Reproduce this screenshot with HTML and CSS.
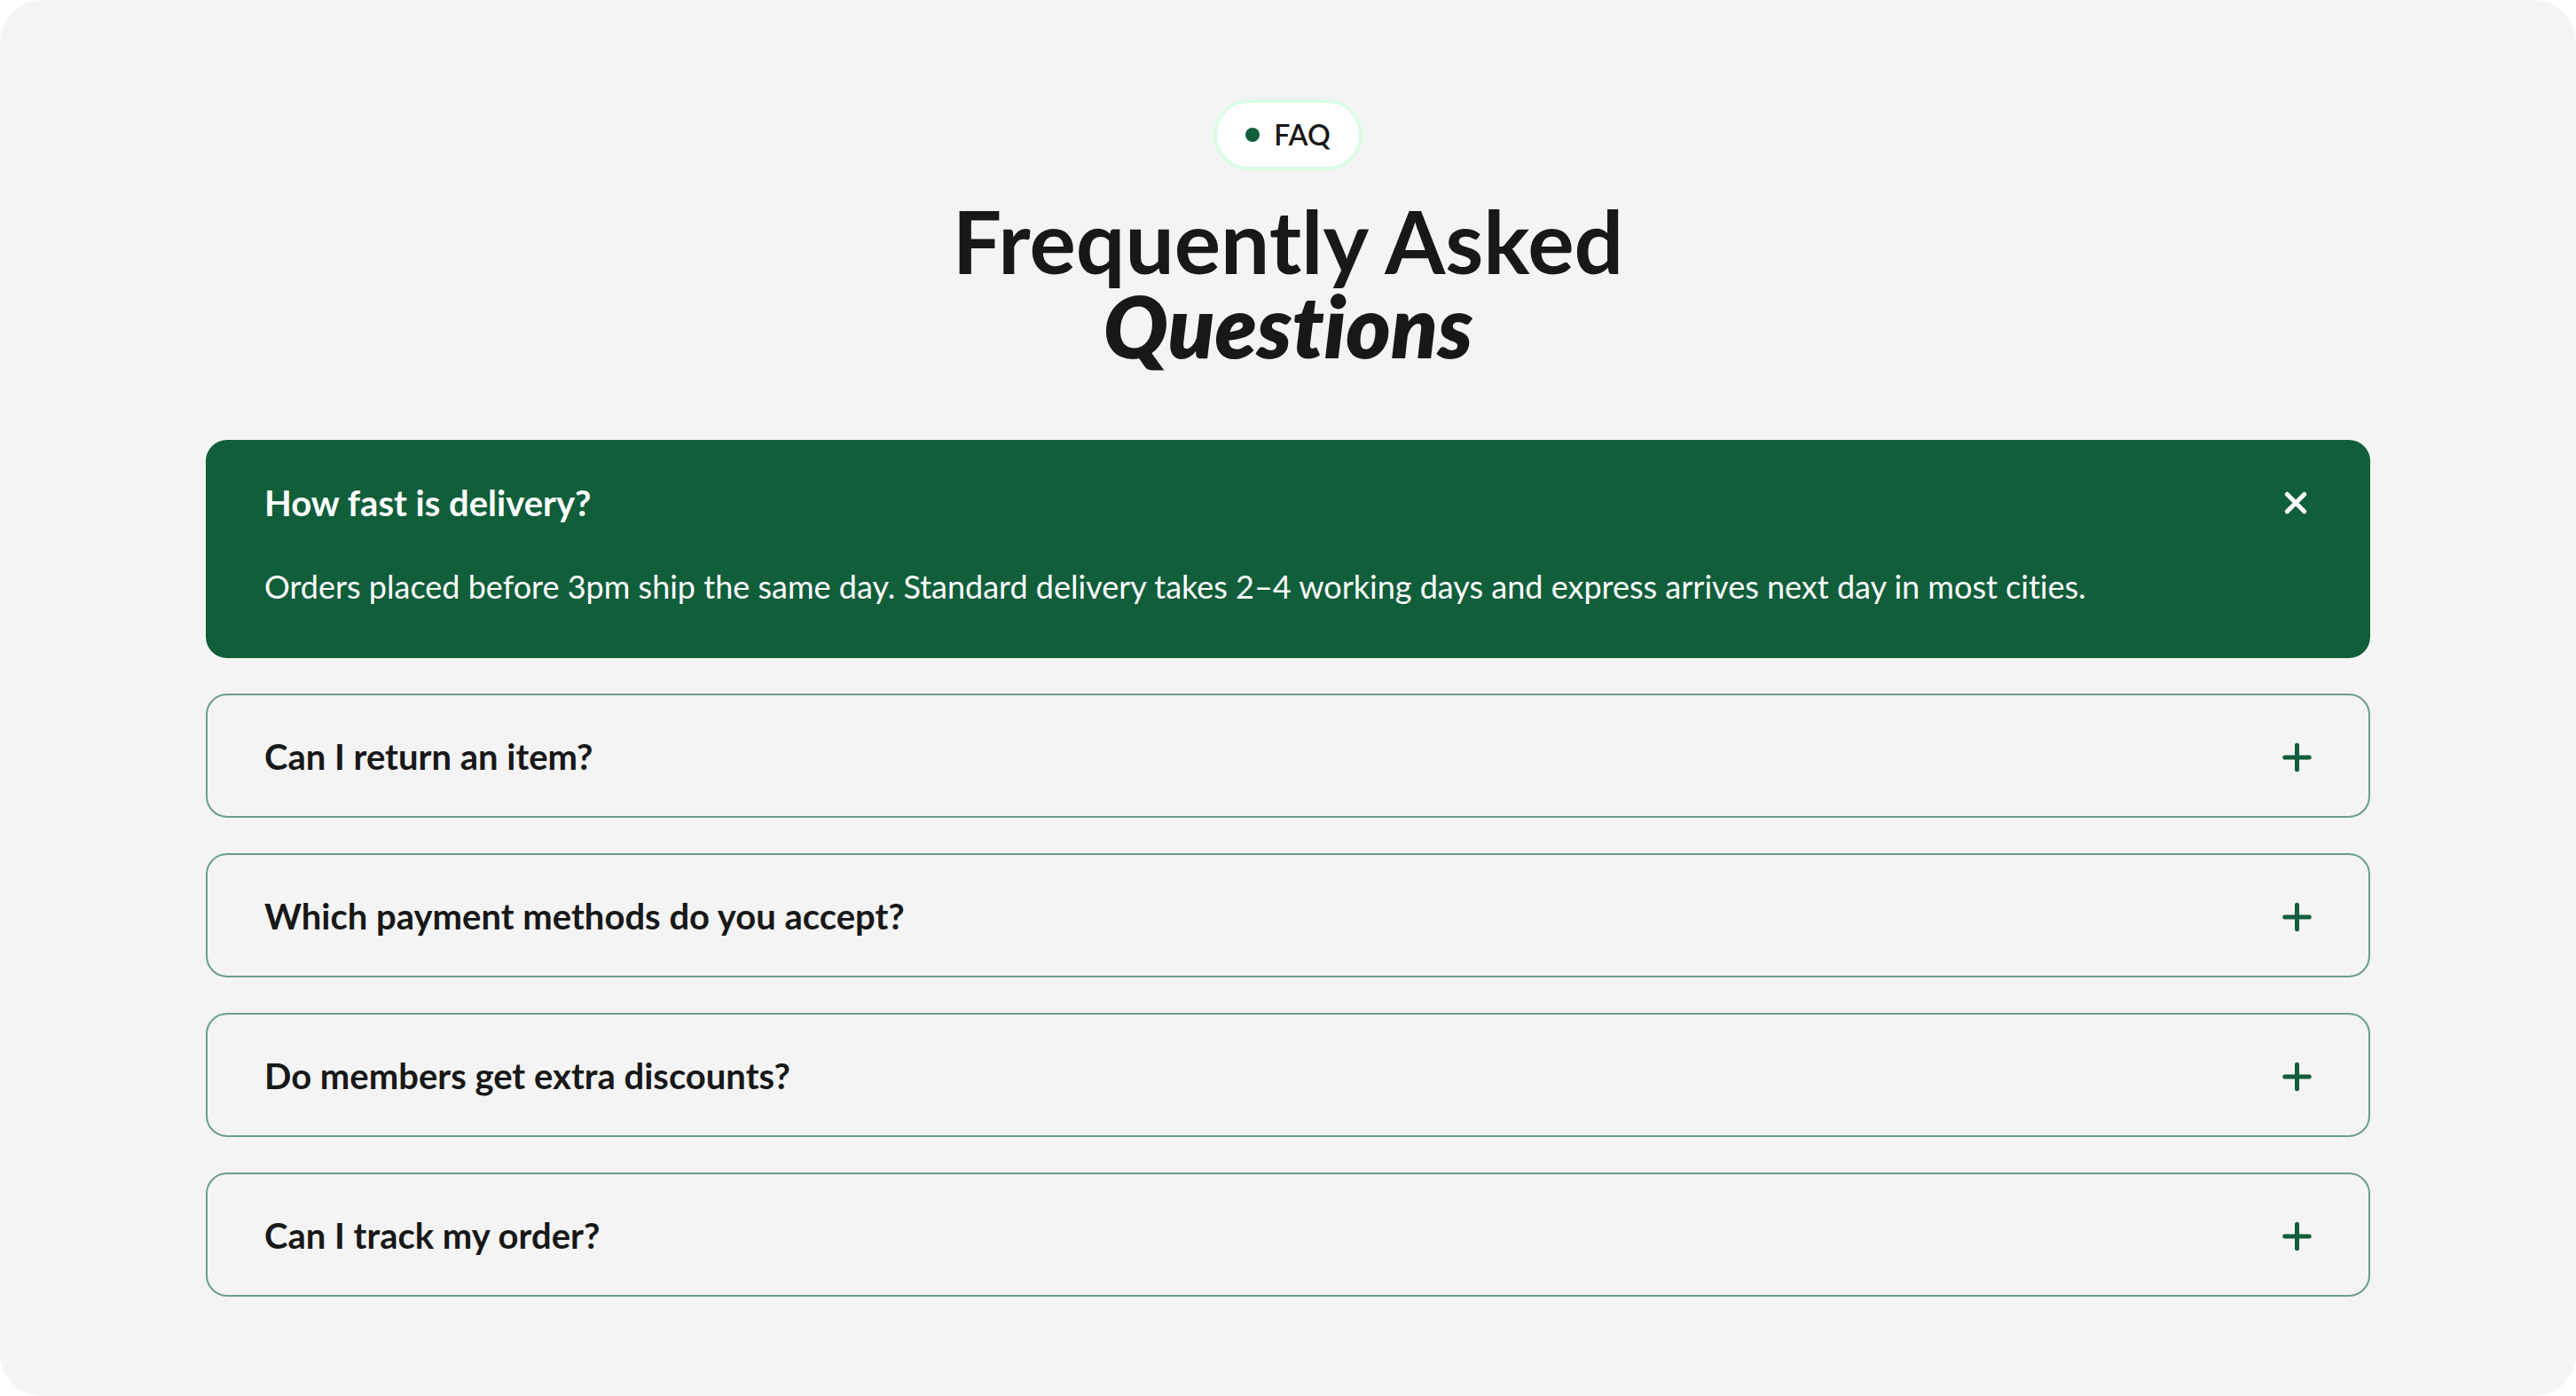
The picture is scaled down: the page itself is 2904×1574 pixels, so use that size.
FILE: index.html
```html
<!DOCTYPE html>
<html lang="en">

<head>
    <meta charset="UTF-8">
    <meta name="viewport" content="width=device-width, initial-scale=1.0">
    <title>FAQ</title>
    <link rel="stylesheet" href="styles.css">
</head>

<body>
    <section class="faq">
        <header class="faq-header">
            <span class="badge"><span class="badge-dot"></span>FAQ</span>
            <h2>Frequently Asked <em>Questions</em></h2>
        </header>

        <div class="faq-list">
            <div class="faq-item open">
                <button class="faq-question" type="button" aria-expanded="true">
                    <span>How fast is delivery?</span>
                    <svg class="icon" viewBox="0 0 40 40" aria-hidden="true"><path d="M10.3 10.2l19.5 19.5M29.8 10.2L10.3 29.7" /></svg>
                </button>
                <p class="faq-answer">Orders placed before 3pm ship the same day. Standard delivery takes 2–4 working days and express arrives next day in most cities.</p>
            </div>

            <div class="faq-item">
                <button class="faq-question" type="button" aria-expanded="false">
                    <span>Can I return an item?</span>
                    <svg class="icon" viewBox="0 0 40 40" aria-hidden="true"><path d="M21.5 7.3v27.4M7.8 21h27.4" /></svg>
                </button>
            </div>

            <div class="faq-item">
                <button class="faq-question" type="button" aria-expanded="false">
                    <span>Which payment methods do you accept?</span>
                    <svg class="icon" viewBox="0 0 40 40" aria-hidden="true"><path d="M21.5 7.3v27.4M7.8 21h27.4" /></svg>
                </button>
            </div>

            <div class="faq-item">
                <button class="faq-question" type="button" aria-expanded="false">
                    <span>Do members get extra discounts?</span>
                    <svg class="icon" viewBox="0 0 40 40" aria-hidden="true"><path d="M21.5 7.3v27.4M7.8 21h27.4" /></svg>
                </button>
            </div>

            <div class="faq-item">
                <button class="faq-question" type="button" aria-expanded="false">
                    <span>Can I track my order?</span>
                    <svg class="icon" viewBox="0 0 40 40" aria-hidden="true"><path d="M21.5 7.3v27.4M7.8 21h27.4" /></svg>
                </button>
            </div>
        </div>
    </section>
</body>

</html>
```
FILE: styles.css
```css
* {
    box-sizing: border-box;
}

body {
    margin: 0;
    font-family: 'Lato', sans-serif;
    font-variant-ligatures: none;
    background-color: #fff;
    color: #181818;
}

.faq {
    padding: 112px 64px;
    background-color: #f4f4f4;
    border-radius: 48px;
}

.faq-header {
    display: flex;
    flex-direction: column;
    align-items: center;
    gap: 31px;
    margin-bottom: 81px;
    text-align: center;
}

.badge {
    display: flex;
    align-items: center;
    gap: 16px;
    padding: 16px 32px;
    border: 4px solid #dcfce7;
    border-radius: 40px;
    background-color: #fff;
    font-size: 32px;
    font-weight: 600;
    line-height: 40px;
}

.badge-dot {
    width: 16px;
    height: 16px;
    border-radius: 50%;
    background-color: #115e3b;
}

h2 {
    margin: 0;
    font-size: 98px;
    font-weight: 700;
    line-height: 96px;
}

h2 em {
    display: block;
    font-size: 96px;
    font-weight: 800;
}

.faq-list {
    display: flex;
    flex-direction: column;
    gap: 40px;
    max-width: 2440px;
    margin: 0 auto;
}

.faq-item {
    border: 2px solid #6c9e86;
    border-radius: 24px;
}

.faq-question {
    display: flex;
    justify-content: space-between;
    align-items: center;
    gap: 32px;
    width: 100%;
    padding: 45px 62px 43px 64px;
    border: none;
    background: none;
    color: inherit;
    font-family: inherit;
    font-size: 40px;
    font-weight: 700;
    font-variant-ligatures: none;
    line-height: 48px;
    text-align: left;
    cursor: pointer;
}

.icon {
    flex: none;
    width: 40px;
    height: 40px;
    fill: none;
    stroke: #115e3b;
    stroke-width: 5;
    stroke-linecap: round;
}

.faq-answer {
    margin: 0;
    padding: 0 64px 50px;
    font-size: 36px;
    line-height: 58px;
}

.faq-item.open {
    border-color: #115e3b;
    background-color: #115e3b;
    color: #fff;
}

.faq-item.open .faq-question {
    padding-bottom: 41px;
}

.faq-item.open .icon {
    stroke: #fff;
}
```
